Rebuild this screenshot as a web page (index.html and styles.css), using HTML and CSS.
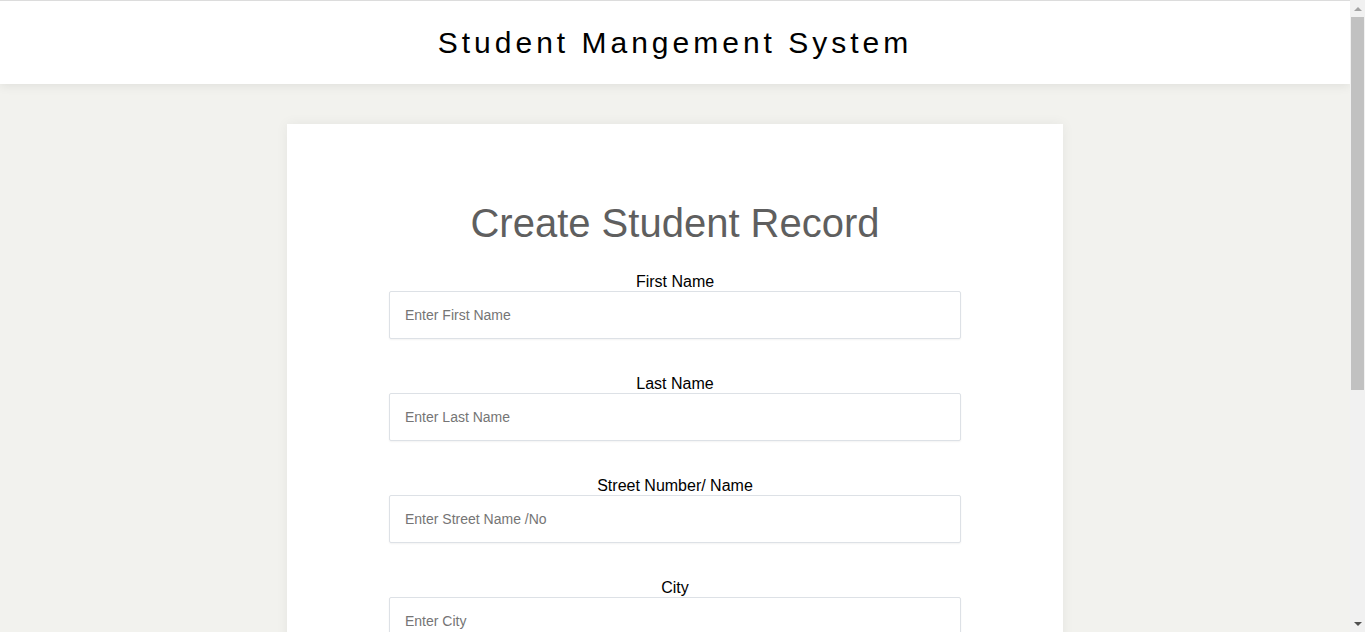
FILE: index.html
```html
<!DOCTYPE html>
<html lang="en">
<head>
<meta charset="utf-8">
<title>Student Mangement System</title>
<link rel="stylesheet" href="styles.css">
</head>
<body>
<div class="viewport">
  <div class="content">
    <header class="topbar">
      <h1 class="brand">Student Mangement System</h1>
    </header>
    <main class="page">
      <section class="card">
        <h2 class="card-title">Create Student Record</h2>
        <form class="form">
          <div class="field">
            <label class="field-label" for="fn">First Name</label>
            <input class="field-input" id="fn" type="text" placeholder="Enter First Name">
          </div>
          <div class="field">
            <label class="field-label" for="ln">Last Name</label>
            <input class="field-input" id="ln" type="text" placeholder="Enter Last Name">
          </div>
          <div class="field">
            <label class="field-label" for="st">Street Number/ Name</label>
            <input class="field-input" id="st" type="text" placeholder="Enter Street Name /No">
          </div>
          <div class="field">
            <label class="field-label" for="ct">City</label>
            <input class="field-input" id="ct" type="text" placeholder="Enter City">
          </div>
        </form>
      </section>
    </main>
  </div>
  <div class="scrollbar" aria-hidden="true">
    <div class="sb-arrow sb-up"></div>
    <div class="sb-track">
      <div class="sb-thumb"></div>
    </div>
    <div class="sb-arrow sb-down"></div>
  </div>
</div>
</body>
</html>
```
FILE: styles.css
```css
html, body {
  margin: 0;
  padding: 0;
  height: 100%;
  overflow: hidden;
}
body {
  background: #f2f2ee;
  font-family: "Liberation Sans", Arial, sans-serif;
  color: #000;
}
.viewport {
  display: grid;
  grid-template-columns: 1fr 15px;
  height: 100vh;
}
.content {
  overflow: hidden;
  min-width: 0;
}
.topbar {
  background: #fff;
  border-top: 1px solid #dcdcdc;
  height: 83px;
  display: flex;
  align-items: center;
  justify-content: center;
  box-shadow: 0 2px 10px rgba(0, 0, 0, 0.08);
  position: relative;
  z-index: 1;
}
.brand {
  margin: 0;
  font-size: 30px;
  font-weight: normal;
  letter-spacing: 4px;
  line-height: 34px;
}
.page {
  padding: 40px 0 44px;
  display: flex;
  justify-content: center;
}
.card {
  width: 776px;
  box-sizing: border-box;
  background: #fff;
  padding: 77px 102px 40px;
  box-shadow: 0 0 12px rgba(0, 0, 0, 0.06);
}
.card-title {
  margin: 0 0 27px;
  text-align: center;
  font-size: 40px;
  font-weight: normal;
  color: #5f5f5f;
  line-height: 45px;
}
.form {
  display: flex;
  flex-direction: column;
}
.field {
  display: flex;
  flex-direction: column;
  margin-bottom: 36px;
}
.field-label {
  text-align: center;
  font-size: 16px;
  line-height: 18px;
}
.field-input {
  height: 48px;
  box-sizing: border-box;
  border: 1px solid #dde1e6;
  border-radius: 2px;
  padding: 0 15px;
  font-family: "Liberation Sans", Arial, sans-serif;
  font-size: 14px;
  color: #333;
  box-shadow: 0 1px 2px rgba(0, 0, 0, 0.05);
  outline: none;
}
.field-input::placeholder {
  color: #757575;
}
.scrollbar {
  background: #f1f1f1;
  display: flex;
  flex-direction: column;
  height: 100vh;
}
.sb-arrow {
  height: 17px;
  display: flex;
  align-items: center;
  justify-content: center;
}
.sb-arrow::before {
  content: "";
  width: 0;
  height: 0;
  border-left: 4px solid transparent;
  border-right: 4px solid transparent;
}
.sb-up::before {
  border-bottom: 4px solid #a3a3a3;
}
.sb-down::before {
  border-top: 4px solid #505050;
}
.sb-track {
  flex: 1;
  padding: 0 1px 0 1px;
}
.sb-thumb {
  height: 373px;
  background: #c1c1c1;
}
```
